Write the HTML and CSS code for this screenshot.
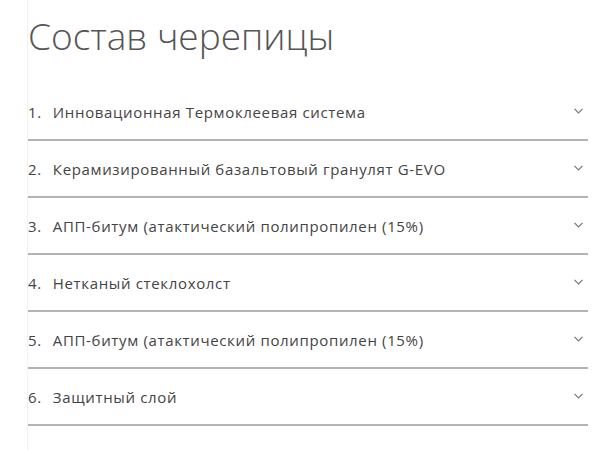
FILE: index.html
```html
<!DOCTYPE html>
<html lang="ru">
<head>
<meta charset="utf-8">
<link rel="stylesheet" href="styles.css">
</head>
<body>
<div class="wrap">
  <h1 class="title">Состав черепицы</h1>
  <ul class="list">
    <li class="item"><span class="num">1.</span><span class="label">Инновационная Термоклеевая система</span><svg class="chev" width="9" height="6" viewBox="0 0 9 6"><path d="M0.5 0.8 L4.5 4.8 L8.5 0.8" fill="none" stroke="#777" stroke-width="1.2"/></svg></li>
    <li class="item"><span class="num">2.</span><span class="label">Керамизированный базальтовый гранулят G-EVO</span><svg class="chev" width="9" height="6" viewBox="0 0 9 6"><path d="M0.5 0.8 L4.5 4.8 L8.5 0.8" fill="none" stroke="#777" stroke-width="1.2"/></svg></li>
    <li class="item"><span class="num">3.</span><span class="label">АПП-битум (атактический полипропилен (15%)</span><svg class="chev" width="9" height="6" viewBox="0 0 9 6"><path d="M0.5 0.8 L4.5 4.8 L8.5 0.8" fill="none" stroke="#777" stroke-width="1.2"/></svg></li>
    <li class="item"><span class="num">4.</span><span class="label">Нетканый стеклохолст</span><svg class="chev" width="9" height="6" viewBox="0 0 9 6"><path d="M0.5 0.8 L4.5 4.8 L8.5 0.8" fill="none" stroke="#777" stroke-width="1.2"/></svg></li>
    <li class="item"><span class="num">5.</span><span class="label">АПП-битум (атактический полипропилен (15%)</span><svg class="chev" width="9" height="6" viewBox="0 0 9 6"><path d="M0.5 0.8 L4.5 4.8 L8.5 0.8" fill="none" stroke="#777" stroke-width="1.2"/></svg></li>
    <li class="item"><span class="num">6.</span><span class="label">Защитный слой</span><svg class="chev" width="9" height="6" viewBox="0 0 9 6"><path d="M0.5 0.8 L4.5 4.8 L8.5 0.8" fill="none" stroke="#777" stroke-width="1.2"/></svg></li>
  </ul>
</div>
</body>
</html>
```

FILE: styles.css
```css
html, body {
  margin: 0;
  padding: 0;
  background: #fff;
}
body {
  font-family: "Open Sans", "Liberation Sans", sans-serif;
  color: #444;
  height: 450px;
  overflow: hidden;
}
.wrap {
  margin-left: 27px;
  width: 561px;
  border-left: 1px solid #f1f1f1;
  min-height: 450px;
  box-sizing: border-box;
}
.title {
  margin: 0;
  padding-top: 12px;
  font-size: 37px;
  font-weight: 300;
  line-height: 48px;
  color: #555;
  height: 72px;
}
.list {
  list-style: none;
  margin: 0;
  padding: 0;
}
.item {
  display: flex;
  align-items: center;
  height: 55px;
  border-bottom: 2px solid #b3b3b3;
  font-size: 15px;
  letter-spacing: 0.65px;
  color: #444;
}
.num {
  margin-right: 11px;
}
.label {
  flex: 1;
}
.chev {
  margin-right: 5px;
  margin-top: -2px;
}
```
